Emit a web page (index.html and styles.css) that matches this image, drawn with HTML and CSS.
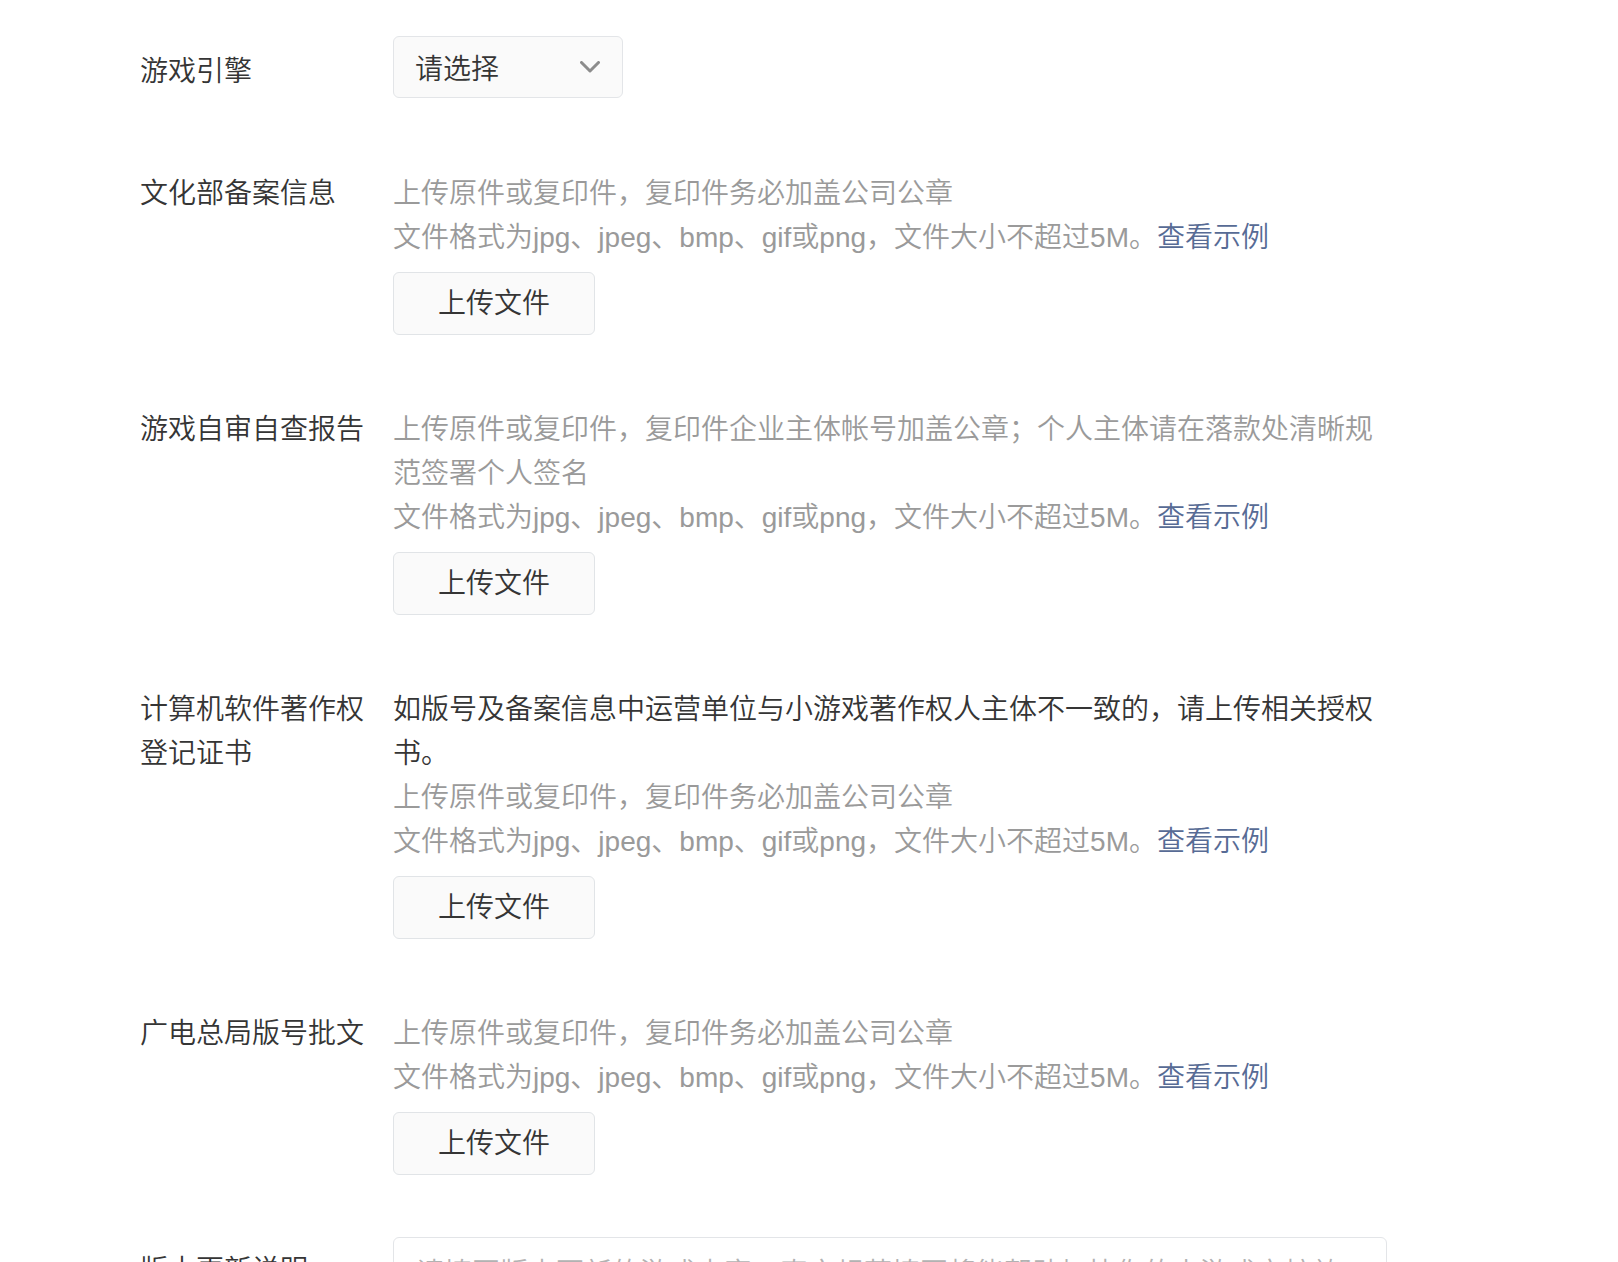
FILE: index.html
```html
<!DOCTYPE html>
<html lang="zh-CN">
<head>
<meta charset="utf-8">
<title>小游戏资料</title>
<link rel="stylesheet" href="styles.css">
</head>
<body>
<div class="form">
  <div class="form-row form-row--center">
    <div class="form-label form-label--select">游戏引擎</div>
    <div class="form-content">
      <div class="select">
        <span class="select-text">请选择</span>
        <svg class="select-arrow" width="20" height="12" viewBox="0 0 20 12"><polyline points="1.5,1.5 10,10 18.5,1.5" fill="none" stroke="#8c8c8c" stroke-width="3" stroke-linecap="round" stroke-linejoin="round"/></svg>
      </div>
    </div>
  </div>

  <div class="form-row">
    <div class="form-label">文化部备案信息</div>
    <div class="form-content">
      <p class="tips">上传原件或复印件，复印件务必加盖公司公章</p>
      <p class="tips">文件格式为jpg、jpeg、bmp、gif或png，文件大小不超过5M。<a class="link" href="#">查看示例</a></p>
      <button class="btn" type="button">上传文件</button>
    </div>
  </div>

  <div class="form-row">
    <div class="form-label">游戏自审自查报告</div>
    <div class="form-content">
      <p class="tips">上传原件或复印件，复印件企业主体帐号加盖公章；个人主体请在落款处清晰规范签署个人签名</p>
      <p class="tips">文件格式为jpg、jpeg、bmp、gif或png，文件大小不超过5M。<a class="link" href="#">查看示例</a></p>
      <button class="btn" type="button">上传文件</button>
    </div>
  </div>

  <div class="form-row">
    <div class="form-label">计算机软件著作权登记证书</div>
    <div class="form-content">
      <p class="desc">如版号及备案信息中运营单位与小游戏著作权人主体不一致的，请上传相关授权书。</p>
      <p class="tips">上传原件或复印件，复印件务必加盖公司公章</p>
      <p class="tips">文件格式为jpg、jpeg、bmp、gif或png，文件大小不超过5M。<a class="link" href="#">查看示例</a></p>
      <button class="btn" type="button">上传文件</button>
    </div>
  </div>

  <div class="form-row form-row--tight">
    <div class="form-label">广电总局版号批文</div>
    <div class="form-content">
      <p class="tips">上传原件或复印件，复印件务必加盖公司公章</p>
      <p class="tips">文件格式为jpg、jpeg、bmp、gif或png，文件大小不超过5M。<a class="link" href="#">查看示例</a></p>
      <button class="btn" type="button">上传文件</button>
    </div>
  </div>

  <div class="form-row">
    <div class="form-label form-label--textarea">版本更新说明</div>
    <div class="form-content">
      <div class="textarea">
        <span class="placeholder">请填写版本更新的游戏内容，真实规范填写将能帮助加快你的小游戏审核效率</span>
      </div>
    </div>
  </div>
</div>
</body>
</html>
```

FILE: styles.css
```css
* {
  box-sizing: border-box;
}

html, body {
  margin: 0;
  padding: 0;
  background: #ffffff;
}

body {
  font-family: "Liberation Sans", "Noto Sans CJK SC", sans-serif;
  font-size: 28px;
  font-weight: 350;
  color: #353535;
  line-height: 44px;
}

.form {
  padding: 36px 0 0 140px;
}

.form-row {
  display: flex;
  align-items: flex-start;
  margin-bottom: 73px;
}

.form-row--center {
  align-items: center;
  margin-bottom: 74px;
}

.form-row--tight {
  margin-bottom: 62px;
}

.form-label {
  flex: 0 0 253px;
  width: 253px;
  padding-right: 20px;
  color: #353535;
  line-height: 44px;
}

.form-label--select {
  height: 62px;
  line-height: 52px;
  padding-top: 10px;
}

.form-label--textarea {
  padding-top: 12px;
}

.form-content {
  width: 994px;
  display: flex;
  flex-direction: column;
  align-items: flex-start;
}

.tips,
.desc {
  margin: 0;
  line-height: 44px;
}

.tips {
  color: #9a9a9a;
}

.desc {
  color: #353535;
}

.link {
  color: #576b95;
  text-decoration: none;
}

.select {
  width: 230px;
  height: 62px;
  border: 1px solid #e3e5e8;
  border-radius: 6px;
  background: #fafafa;
  display: flex;
  align-items: center;
  justify-content: space-between;
  padding: 0 22px 0 21px;
}

.select-text {
  color: #353535;
  line-height: 54px;
  padding-top: 6px;
}

.select-arrow {
  display: block;
}

.btn {
  margin-top: 12px;
  width: 202px;
  height: 63px;
  border: 1px solid #e1e4e7;
  border-radius: 6px;
  background: #fafafa;
  color: #353535;
  font-family: inherit;
  font-size: 28px;
  font-weight: 350;
  line-height: 61px;
  padding: 0;
  text-align: center;
}

.textarea {
  width: 994px;
  height: 160px;
  border: 1px solid #e3e5e8;
  border-radius: 6px;
  background: #fff;
  padding: 14px 22px;
}

.placeholder {
  color: #b2b2b2;
  line-height: 44px;
}
```
